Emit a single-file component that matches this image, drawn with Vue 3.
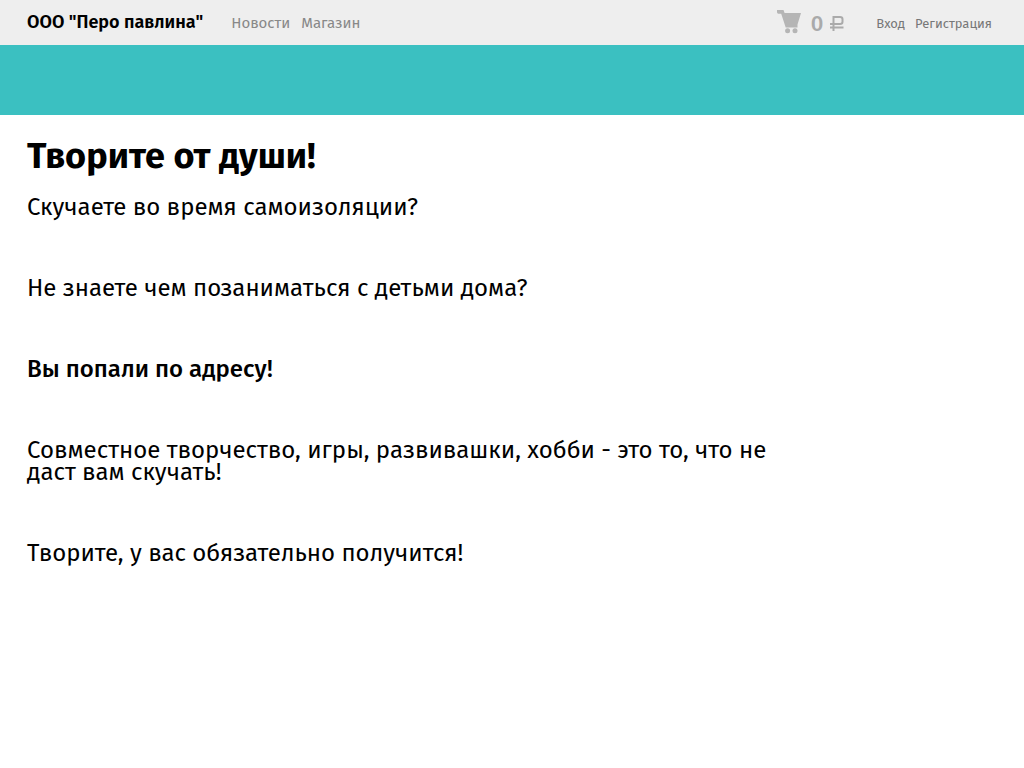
<script setup>
const sections = ['Новости', 'Магазин']
const account = ['Вход', 'Регистрация']
</script>

<template>
  <div class="page">
    <header class="topbar">
      <a class="brand" href="#">ООО "Перо павлина"</a>
      <nav class="sections" aria-label="Разделы">
        <a v-for="item in sections" :key="item" href="#">{{ item }}</a>
      </nav>
      <a class="cart" href="#" aria-label="Корзина">
        <svg width="25" height="24" viewBox="0 0 25 24" aria-hidden="true">
          <path d="M0 0H6.5L7.6 3H24L20.5 14.5V17.5H8.7L4.2 3.8H1.4Q0 3.6 0 2.2Z" />
          <circle cx="10.6" cy="20.8" r="2.5" />
          <circle cx="18" cy="20.8" r="2.5" />
        </svg>
        <span>0</span>
        <svg class="ruble" width="14" height="15" viewBox="0 0 14 15" role="img" aria-label="рублей">
          <path d="M3.5 15V1H10Q12.5 1 12.5 3.2V5.8Q12.5 8 10 8H0M0 11.5H13.5" />
        </svg>
      </a>
      <nav class="account" aria-label="Профиль">
        <a v-for="item in account" :key="item" href="#">{{ item }}</a>
      </nav>
    </header>
    <div class="banner"></div>
    <main class="content">
      <h1>Творите от души!</h1>
      <p>Скучаете во время самоизоляции?</p>
      <p>Не знаете чем позаниматься с детьми дома?</p>
      <p><strong>Вы попали по адресу!</strong></p>
      <p>Совместное творчество, игры, развивашки, хобби - это то, что не даст вам скучать!</p>
      <p>Творите, у вас обязательно получится!</p>
    </main>
  </div>
</template>

<style>
body {
  margin: 0;
  background: #fff;
}
</style>

<style scoped>
.page {
  font-family: "Fira Sans", "Noto Sans", "Open Sans", sans-serif;
  color: #000;
}
a {
  color: inherit;
  text-decoration: none;
}
.topbar {
  display: flex;
  align-items: baseline;
  height: 45px;
  padding: 0 32px 0 27px;
  background: #eee;
  line-height: 45px;
  white-space: nowrap;
}
.brand {
  font-size: 18px;
  font-weight: 600;
}
.sections {
  display: flex;
  gap: 11px;
  margin-left: 28px;
  font-size: 15px;
  color: #888;
}
.cart {
  display: flex;
  align-self: flex-start;
  align-items: flex-start;
  margin-left: auto;
  padding-top: 10px;
  font-size: 22px;
  line-height: 28px;
  font-weight: 500;
  color: #aaa;
}
.cart span {
  margin: 0 7px 0 9px;
}
.cart svg {
  fill: #b5b5b5;
}
.cart .ruble {
  margin-top: 6px;
  fill: none;
  stroke: #aaa;
  stroke-width: 2;
}
.account {
  display: flex;
  gap: 10px;
  margin-left: 32px;
  font-size: 13px;
  color: #777;
}
.banner {
  height: 70px;
  background: #3bc0c1;
}
.content {
  max-width: 750px;
  padding: 23px 27px;
}
h1 {
  margin: 0 0 22px;
  font-size: 36px;
  line-height: 36px;
  font-weight: 700;
}
p {
  margin: 0 0 59px;
  font-size: 24px;
  line-height: 22px;
}
strong {
  font-weight: 500;
}
</style>
